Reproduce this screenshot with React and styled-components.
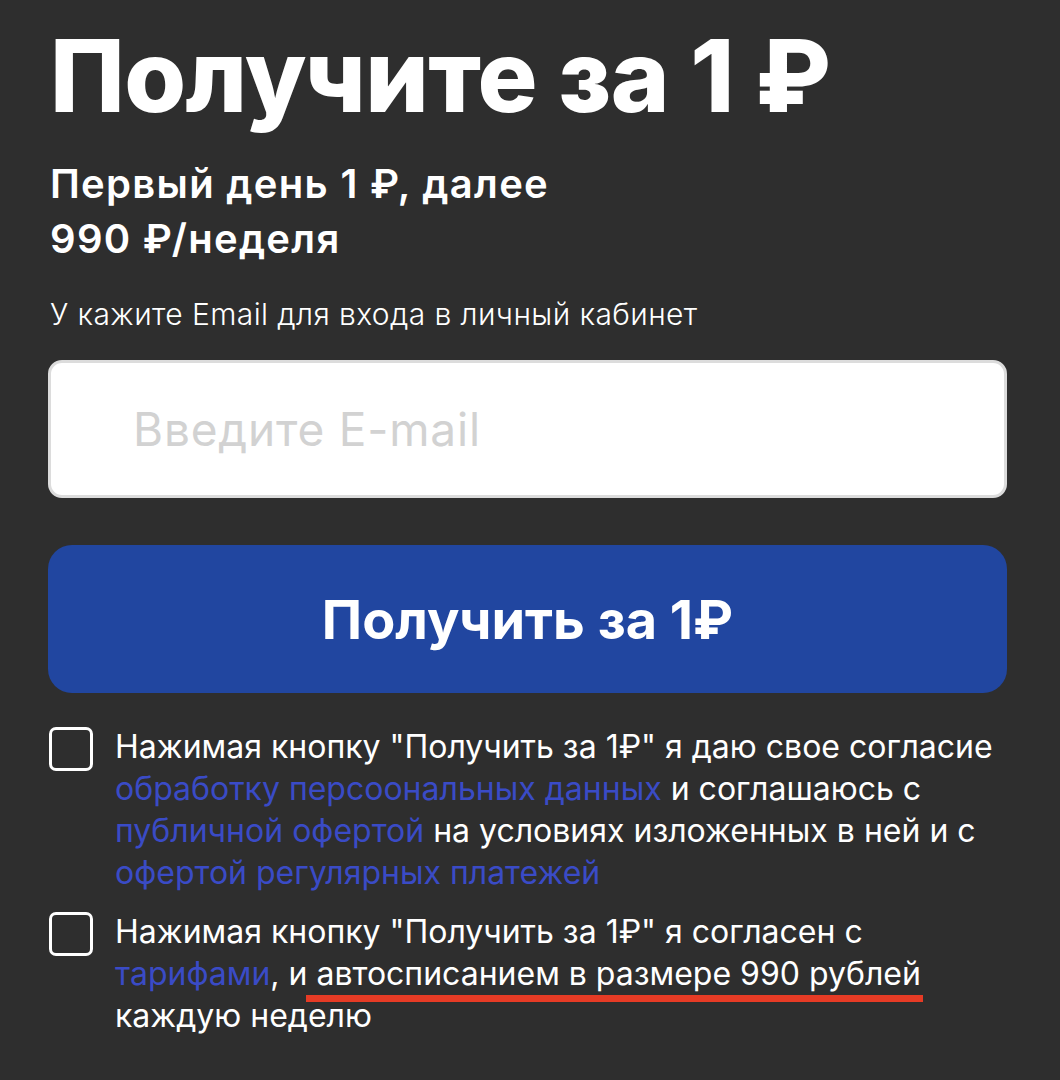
import React from 'react';
import styled, {createGlobalStyle} from 'styled-components';

const GlobalStyle = createGlobalStyle`
  html, body {
    margin: 0;
    padding: 0;
    background: #2e2e2e;
  }
  body {
    font-family: Inter, "Noto Sans", sans-serif;
    color: #fff;
  }
`;

const Page = styled.div`
  width: 1060px;
  height: 1080px;
  box-sizing: border-box;
  padding: 16px 53px 0 48px;
  overflow: hidden;
`;

const Title = styled.h1`
  margin: 0 0 0 2px;
  font-size: 100px;
  line-height: 120px;
  font-weight: 800;
  letter-spacing: -0.6px;
`;

const Subtitle = styled.p`
  margin: 20px 0 0 2px;
  font-size: 40px;
  line-height: 55px;
  font-weight: 600;
  letter-spacing: 1.3px;
`;

const Hint = styled.p`
  margin: 28px 0 0 2px;
  font-size: 30px;
  line-height: 40px;
  font-weight: 300;
  letter-spacing: 0.4px;
`;

const EmailInput = styled.input`
  display: block;
  box-sizing: border-box;
  width: 100%;
  height: 138px;
  margin-top: 26px;
  padding: 0 0 0 82px;
  border: 3px solid #dcdcdc;
  border-radius: 14px;
  background: #fff;
  font-family: inherit;
  font-size: 46px;
  letter-spacing: 0.8px;
  color: #222;
  outline: none;

  &::placeholder {
    color: #d2d2d2;
  }
`;

const SubmitButton = styled.button`
  display: block;
  width: 100%;
  height: 148px;
  margin-top: 47px;
  border: none;
  border-radius: 24px;
  background: #2146a0;
  color: #fff;
  font-family: inherit;
  font-size: 54px;
  font-weight: 700;
`;

const Agreements = styled.div`
  display: flex;
  flex-direction: column;
  gap: 18px;
  margin-top: 34px;
`;

const Row = styled.label`
  display: flex;
  align-items: flex-start;
  gap: 22px;
`;

const Box = styled.span`
  flex: none;
  box-sizing: border-box;
  width: 44px;
  height: 44px;
  margin: 0 0 0 1px;
  border: 3px solid #fff;
  border-radius: 7px;
`;

const Text = styled.p`
  margin: -1px 0 0 0;
  font-size: 32px;
  line-height: 42px;
  font-weight: 400;
  white-space: nowrap;
`;

const Link = styled.a`
  color: #3a4bc6;
  text-decoration: none;
`;

const Marked = styled.span`
  position: relative;

  &::after {
    content: '';
    position: absolute;
    left: -10px;
    right: -2px;
    bottom: -9px;
    height: 7px;
    background: #e63b25;
  }
`;

export default function App() {
  return (
    <Page>
      <GlobalStyle />
      <Title>Получите за 1 ₽</Title>
      <Subtitle>
        Первый день 1 ₽, далее
        <br />
        990 ₽/неделя
      </Subtitle>
      <Hint>У кажите Email для входа в личный кабинет</Hint>
      <EmailInput type="email" placeholder="Введите E-mail" />
      <SubmitButton type="button">Получить за 1₽</SubmitButton>
      <Agreements>
        <Row>
          <Box />
          <Text>
            Нажимая кнопку "Получить за 1₽" я даю свое согласие
            <br />
            <Link>обработку персоональных данных</Link> и соглашаюсь с
            <br />
            <Link>публичной офертой</Link> на условиях изложенных в ней и с
            <br />
            <Link>офертой регулярных платежей</Link>
          </Text>
        </Row>
        <Row>
          <Box />
          <Text>
            Нажимая кнопку "Получить за 1₽" я согласен с
            <br />
            <Link>тарифами</Link>, и <Marked>автосписанием в размере 990 рублей</Marked>
            <br />
            каждую неделю
          </Text>
        </Row>
      </Agreements>
    </Page>
  );
}
